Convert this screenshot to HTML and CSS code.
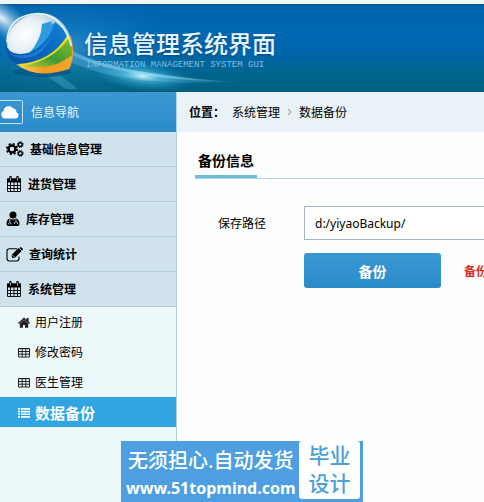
FILE: index.html
```html
<!DOCTYPE html>
<html lang="zh-CN">
<head>
    <meta charset="UTF-8">
    <meta name="viewport" content="width=device-width, initial-scale=1.0">
    <title>信息管理系统界面</title>
    <link rel="stylesheet" href="styles.css">
</head>
<body>

<!-- 图标 -->
<svg class="icon-defs" aria-hidden="true">
    <symbol id="icon-cloud" viewBox="0 0 18 14">
        <path d="M4 13.5A3.9 3.9 0 0 1 2.600 6 5.200 5.200 0 0 1 12.300 3.600 3 3 0 0 1 15.300 7.300 3.200 3.200 0 0 1 14.700 13.500Z" fill="currentColor"/>
    </symbol>
    <symbol id="icon-cogs" viewBox="0 0 18 16">
        <g fill="none" stroke="currentColor">
            <circle cx="6" cy="8" r="3.500" stroke-width="2.400"/>
            <circle cx="6" cy="8" r="5.200" stroke-width="1.800" stroke-dasharray="2.100 1.984"/>
            <circle cx="14.300" cy="3.600" r="1.900" stroke-width="1.400"/>
            <circle cx="14.300" cy="3.600" r="2.900" stroke-width="1" stroke-dasharray="1.200 1.078"/>
            <circle cx="14.300" cy="12.400" r="1.900" stroke-width="1.400"/>
            <circle cx="14.300" cy="12.400" r="2.900" stroke-width="1" stroke-dasharray="1.200 1.078"/>
        </g>
    </symbol>
    <symbol id="icon-calendar" viewBox="0 0 16 16">
        <path d="M1 2.500h14v4H1z" fill="currentColor"/>
        <path d="M1.500 3h13v12.500h-13zM1 9.500h14M1 12.500h14M4.500 6v9.500M8 6v9.500M11.500 6v9.500" fill="none" stroke="currentColor" stroke-width=".9"/>
        <path d="M4.500 1v4M11.500 1v4" stroke="currentColor" stroke-width="2.400" stroke-linecap="round"/>
        <path d="M4.500 1.500v3M11.500 1.500v3" stroke="#d0e3ed" stroke-width=".8"/>
    </symbol>
    <symbol id="icon-user" viewBox="0 0 14 16">
        <circle cx="7" cy="4" r="3.500" fill="currentColor"/>
        <path d="M3.500 7.500Q7 9.500 10.500 7.500 13.500 8.500 13.500 13q0 2-2 2H2.500q-2 0-2-2Q.5 8.500 3.500 7.500Z" fill="currentColor"/>
        <path d="M3.800 8v3.500M2.500 13.500v-1.200q1.300-1.300 2.600 0v1.200M10 8.500v2M8.500 13v-1.500q1.500-1.500 3 0V13" fill="none" stroke="#d0e3ed" stroke-width=".8"/>
    </symbol>
    <symbol id="icon-edit" viewBox="0 0 17 15">
        <path d="M11 1.700H3.500Q1 1.700 1 4v7.500Q1 14 3.500 14h7q2.500 0 2.500-2.500V9.500" fill="none" stroke="currentColor" stroke-width="1.100"/>
        <path d="M5.800 10.800V7.700L12.500 1l3.100 3.100-6.700 6.700Z" fill="currentColor"/>
        <path d="M14 .4q.7-.6 1.400 0l1.200 1.200q.6.700 0 1.400l-.6.600L13.400 1Z" fill="currentColor"/>
        <path d="M6.700 8.200l1.800 1.800" stroke="#d0e3ed" stroke-width=".8"/>
    </symbol>
    <symbol id="icon-home" viewBox="0 0 12 11">
        <path d="M6 .5L12 6l-.9 1L6 2.500.9 7 0 6ZM8.600 1h2v4l-2-1.800Z" fill="currentColor"/>
        <path d="M1.800 6.500L6 2.800l4.200 3.700v4.200H7V8H5v2.700H1.800Z" fill="currentColor"/>
    </symbol>
    <symbol id="icon-table" viewBox="0 0 12 11">
        <path d="M.5 1.500h11v8.500H.5zM.5 4.500h11M.5 7.200h11M4.200 2v8M7.800 2v8" fill="none" stroke="currentColor"/>
        <path d="M.5 1h11v1.200H.5z" fill="currentColor"/>
    </symbol>
    <symbol id="icon-list" viewBox="0 0 12 11">
        <path d="M0 1h2v1.700H0zM3 1h9v1.700H3zM0 3.700h2v1.700H0zM3 3.700h9v1.700H3zM0 6.400h2v1.700H0zM3 6.400h9v1.700H3zM0 9h2v1.700H0zM3 9h9v1.700H3z" fill="currentColor"/>
    </symbol>
</svg>

<!-- 顶部 -->
<header class="header">
    <svg class="header-bg" width="300" height="87" viewBox="0 0 300 87" aria-hidden="true">
        <defs>
            <radialGradient id="corner">
                <stop offset="0" stop-color="#fff" stop-opacity=".9"/>
                <stop offset="1" stop-color="#6dbbe8" stop-opacity="0"/>
            </radialGradient>
            <radialGradient id="spark">
                <stop offset="0" stop-color="#d9f8ff" stop-opacity=".95"/>
                <stop offset=".35" stop-color="#55c2e6" stop-opacity=".6"/>
                <stop offset="1" stop-color="#1b92cf" stop-opacity="0"/>
            </radialGradient>
            <linearGradient id="tail">
                <stop offset="0" stop-color="#55aee0" stop-opacity=".7"/>
                <stop offset=".5" stop-color="#b8ecfa" stop-opacity=".8"/>
                <stop offset="1" stop-color="#3ba1d4" stop-opacity="0"/>
            </linearGradient>
        </defs>
        <ellipse cx="65" cy="45" rx="115" ry="60" fill="url(#spark)" opacity=".28"/>
        <ellipse cx="2" cy="14" rx="42" ry="17" transform="rotate(38 2 14)" fill="url(#corner)"/>
        <path d="M66 42Q105 72 245 78 120 84 66 56Z" fill="url(#tail)" opacity=".45"/>
        <path d="M68 45Q110 70 240 78 125 77 68 49Z" fill="url(#tail)"/>
        <path d="M48 73l12-2 18 14H66Z" fill="#56b2d3" opacity=".35"/>
        <ellipse cx="142" cy="72" rx="52" ry="15" transform="rotate(7 142 72)" fill="url(#spark)"/>
    </svg>
    <svg class="logo" width="70" height="66" viewBox="0 0 70 66" aria-hidden="true">
        <defs>
            <radialGradient id="ball" cx=".4" cy=".35" r=".6">
                <stop offset="0" stop-color="#fff"/>
                <stop offset=".6" stop-color="#e6eef3"/>
                <stop offset="1" stop-color="#b4cedd"/>
            </radialGradient>
            <linearGradient id="band" x1="0" y1="1" x2="1" y2="0">
                <stop offset="0" stop-color="#0750a5"/>
                <stop offset=".55" stop-color="#0869c5"/>
                <stop offset="1" stop-color="#1684d6"/>
            </linearGradient>
            <linearGradient id="leaf" x1="0" y1="1" x2="1" y2="0">
                <stop offset="0" stop-color="#d3d531"/>
                <stop offset=".45" stop-color="#3e9a35"/>
                <stop offset="1" stop-color="#91c720"/>
            </linearGradient>
            <linearGradient id="sun">
                <stop offset="0" stop-color="#f7d36a"/>
                <stop offset=".5" stop-color="#f29a20"/>
                <stop offset="1" stop-color="#f5a42d"/>
            </linearGradient>
        </defs>
        <ellipse cx="38" cy="60" rx="29" ry="5" fill="#07447f" opacity=".45"/>
        <path d="M4 40C-2 20 14 2 35 1 54 0 68 18 68 35L60 28C54 14 45 7 33 7 17 8 7 22 9 42Z" fill="#9fc9e0"/>
        <ellipse cx="29" cy="25" rx="27" ry="21" transform="rotate(-32 29 25)" fill="url(#ball)"/>
        <path d="M26 42Q36 30 39 14l10-4-2 4Q43 33 27 44Z" fill="#58bdea"/>
        <path d="M38 12l10-3-2 5q2-3 6-3Q45 33 24 43q14-16 14-31Z" fill="#2d9bdd"/>
        <path d="M12 52Q32 58 49 42 57 34 67 24 72 45 65 57 32 68 12 52Z" fill="url(#sun)"/>
        <path d="M14 52Q30 50 45 39 57 31 63 22 68 28 68 43 51 57 29 55 20 55 14 52Z" fill="url(#leaf)"/>
        <path d="M14 52Q44 47 63 22l2 4Q49 49 18 54Z" fill="#e6de22"/>
        <path d="M1 30Q3 41 15 42 35 42 47 20L51 10Q60 16 63 24 47 50 14 52 2 49 1 30Z" fill="url(#band)"/>
        <path d="M3 39Q14 47 29 41 40 36 48 23 40 42 27 45 12 49 3 39Z" fill="#3e9fe0" opacity=".4"/>
        <path d="M3 30Q4 3 34 1.500 58 2 67.500 34" fill="none" stroke="#e3f4fc" stroke-width="1.700"/>
    </svg>
    <div class="brand">
        <h1 class="brand-title">信息管理系统界面</h1>
        <p class="brand-sub">INFORMATION MANAGEMENT SYSTEM GUI</p>
    </div>
</header>

<div class="layout">
    <!-- 左侧导航 -->
    <nav class="sidebar">
        <div class="nav-head">
            <span class="nav-badge"><svg width="18" height="14"><use href="#icon-cloud"/></svg></span>
            信息导航
        </div>
        <ul class="menu">
            <li><a href="#"><svg width="18" height="16"><use href="#icon-cogs"/></svg>基础信息管理</a></li>
            <li><a href="#"><svg width="16" height="16"><use href="#icon-calendar"/></svg>进货管理</a></li>
            <li><a href="#"><svg width="14" height="16"><use href="#icon-user"/></svg>库存管理</a></li>
            <li><a href="#"><svg width="17" height="15"><use href="#icon-edit"/></svg>查询统计</a></li>
            <li><a href="#"><svg width="16" height="16"><use href="#icon-calendar"/></svg>系统管理</a></li>
        </ul>
        <ul class="submenu">
            <li><a href="#"><svg width="12" height="11"><use href="#icon-home"/></svg>用户注册</a></li>
            <li><a href="#"><svg width="12" height="11"><use href="#icon-table"/></svg>修改密码</a></li>
            <li><a href="#"><svg width="12" height="11"><use href="#icon-table"/></svg>医生管理</a></li>
            <li><a href="#" class="active"><svg width="12" height="11"><use href="#icon-list"/></svg>数据备份</a></li>
        </ul>
    </nav>

    <!-- 右侧内容 -->
    <main class="content">
        <div class="place">
            <strong>位置：</strong>
            <a href="#">系统管理</a>
            <svg width="5" height="8" viewBox="0 0 5 8" aria-hidden="true"><path d="M1 1l3 3-3 3" fill="none" stroke="#a9b8c0" stroke-width="1.500"/></svg>
            <a href="#">数据备份</a>
        </div>
        <div class="form-title"><h2>备份信息</h2></div>
        <form class="backup-form">
            <div class="row">
                <label for="path">保存路径</label>
                <input type="text" id="path" name="path" value="d:/yiyaoBackup/">
            </div>
            <div class="row submit-row">
                <button type="button" class="btn">备份</button>
                <span class="tip">备份</span>
            </div>
        </form>
    </main>
</div>

<!-- 底部浮动广告 -->
<aside class="promo">
    <div class="promo-text">
        <p class="promo-slogan">无须担心.自动发货</p>
        <a class="promo-link" href="#">www.51topmind.com</a>
    </div>
    <div class="promo-box">毕业<br>设计</div>
</aside>

</body>
</html>
```
FILE: styles.css
```css
* {
    box-sizing: border-box;
}
body {
    margin: 0;
    min-height: 100vh;
    display: flex;
    flex-direction: column;
    overflow: hidden;
    font-family: "Noto Sans", "Noto Sans CJK SC", sans-serif;
    font-size: 12px;
    color: #000;
    background-color: #fdfefe;
}
h1, h2, p, ul {
    margin: 0;
    padding: 0;
}
ul {
    list-style: none;
}
a {
    color: inherit;
    text-decoration: none;
}
svg {
    flex-shrink: 0;
}
.icon-defs {
    position: absolute;
    width: 0;
    height: 0;
}

/* 顶部 */
.header {
    position: relative;
    display: flex;
    gap: 10px;
    height: 92px;
    padding: 8px 0 0 4px;
    border-top: 4px solid #eff6f4;
    border-bottom: 1px solid #12566f;
    background: linear-gradient(#07518b 0, #0064ae 3px, #0068b4 40%, #0065ae 52%, #00658f 78%, #00607f 100%);
}
.header-bg {
    position: absolute;
    left: 0;
    top: 0;
}
.logo, .brand {
    position: relative;
}
.brand {
    padding-top: 16px;
}
.brand-title {
    font-size: 24px;
    line-height: 32px;
    font-weight: 500;
    color: #e4f5fb;
    text-shadow: 0 1px 2px #07477f;
    white-space: nowrap;
}
.brand-sub {
    padding-left: 2px;
    font-family: "Liberation Mono", monospace;
    font-size: 9px;
    line-height: 10px;
    color: #7dbfe2;
    white-space: nowrap;
}

/* 左侧导航 */
.layout {
    flex: 1;
    display: flex;
}
.sidebar {
    flex: 0 0 177px;
    border-right: 1px solid #b5d2df;
    background-color: #edf8fb;
}
.nav-head {
    display: flex;
    align-items: center;
    gap: 8px;
    height: 40px;
    color: #eaf7ff;
    background: linear-gradient(#3a97d3, #2b8bc9);
}
.nav-badge {
    display: flex;
    align-items: center;
    justify-content: flex-end;
    width: 23px;
    height: 24px;
    padding-right: 3px;
    border: 1px solid #c5e4f5;
    border-left: none;
    border-radius: 0 2px 2px 0;
    color: #fff;
}
.menu a {
    display: flex;
    align-items: center;
    gap: 6px;
    height: 35px;
    padding-left: 6px;
    font-weight: bold;
    border-bottom: 1px solid #b5cbd4;
    background-color: #d0e3ed;
}
.submenu a {
    display: flex;
    align-items: center;
    gap: 5px;
    height: 30px;
    padding-left: 18px;
}
.submenu svg {
    color: #222;
}
.submenu .active {
    font-size: 15px;
    font-weight: bold;
    color: #fff;
    background-color: #30a5e2;
}
.submenu .active svg {
    color: #fff;
}

/* 右侧内容 */
.content {
    flex: 1;
    min-width: 0;
    overflow: hidden;
}
.place {
    display: flex;
    align-items: center;
    gap: 7px;
    height: 40px;
    padding-left: 12px;
    background-color: #e9f2f7;
}
.form-title {
    display: flex;
    margin: 12px 0 0 18px;
    border-bottom: 1px solid #b9d3df;
}
.form-title h2 {
    height: 34px;
    padding: 0 3px;
    font-size: 14px;
    line-height: 34px;
    border-bottom: 3px solid #66c0de;
}
.backup-form {
    display: flex;
    flex-direction: column;
    gap: 13px;
    padding: 27px 0 0 41px;
}
.row {
    display: flex;
    align-items: center;
}
.row label {
    flex: 0 0 86px;
}
.row input {
    flex: 1 0 345px;
    height: 34px;
    padding: 0 10px;
    font-family: inherit;
    font-size: 12px;
    color: #000;
    border: 1px solid #a7b5be;
    background-color: #fff;
}
.submit-row {
    gap: 23px;
    padding-left: 86px;
}
.btn {
    flex-shrink: 0;
    width: 137px;
    height: 35px;
    font-family: inherit;
    font-size: 14px;
    font-weight: bold;
    color: #fff;
    border: none;
    border-radius: 3px;
    background: linear-gradient(#3a97d3, #2b8bc9);
    cursor: pointer;
}
.tip {
    font-weight: bold;
    color: #d9301f;
    white-space: nowrap;
}

/* 浮动广告 */
.promo {
    position: fixed;
    left: 50%;
    bottom: 0;
    display: flex;
    width: 242px;
    height: 61px;
    padding-right: 3px;
    transform: translateX(-50%);
    color: #fff;
    background-color: #4d9fe1;
}
.promo-text {
    flex: 1;
    padding: 4px 0 0 5px;
    white-space: nowrap;
}
.promo-slogan {
    padding-left: 2px;
    font-size: 20px;
    line-height: 32px;
    font-weight: 500;
}
.promo-link {
    font-size: 16px;
    line-height: 22px;
    font-weight: bold;
}
.promo-box {
    flex-shrink: 0;
    width: 61px;
    height: 58px;
    border-radius: 3px;
    font-size: 21px;
    line-height: 28px;
    font-weight: 500;
    text-align: center;
    color: #4d9fd8;
    background-color: #fff;
}
```
